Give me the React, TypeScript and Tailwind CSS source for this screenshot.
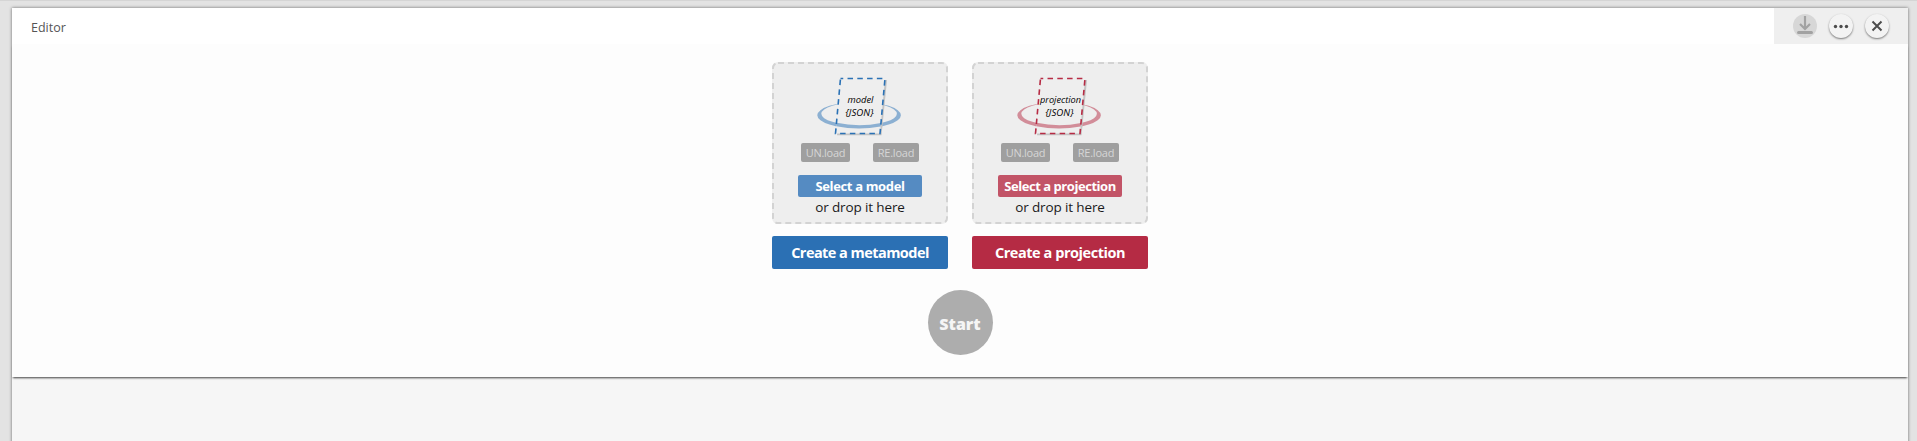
type Kind = {
  name: string;
  color: string;
  select: string;
  selectClass: string;
  create: string;
  createClass: string;
  label: string;
  labelWidth: number;
};

const kinds: Kind[] = [
  {
    name: "model",
    color: "#2a71b5",
    select: "Select a model",
    selectClass: "bg-[#558bc2] tracking-[-0.35px]",
    create: "Create a metamodel",
    createClass: "bg-[#2b70b4] tracking-[-0.55px]",
    label: "model",
    labelWidth: 26,
  },
  {
    name: "projection",
    color: "#b62b44",
    select: "Select a projection",
    selectClass: "bg-[#c25467] tracking-[-0.45px]",
    create: "Create a projection",
    createClass: "bg-[#b52b44] tracking-[-0.45px]",
    label: "projection",
    labelWidth: 41,
  },
];

function DropIcon({ kind }: { kind: Kind }) {
  const text = {
    fontFamily: '"Open Sans", sans-serif',
    fontStyle: "italic",
    fontSize: 9.5,
  };
  return (
    <svg width="90" height="62" viewBox="0 0 90 62" className="-ml-0.5 block">
      <path
        fillRule="evenodd"
        fill={kind.color}
        fillOpacity=".5"
        d="M3.300 41.200a41.800 13.200 0 1 0 83.600 0a41.800 13.200 0 1 0-83.600 0ZM7.300 39.800a37.800 11.300 0 1 1 75.600 0a37.800 11.300 0 1 1-75.600 0Z"
      />
      <path d="M28 6L73 6L67.500 61.300L23 61.300Z" fill="#c4c4c4" />
      <path d="M26.500 4.500L71 4.500L66 59.500L21.500 59.500Z" fill="#eee" />
      <path
        fill={kind.color}
        fillOpacity=".5"
        d="M22.300 52.300Q44 56.500 66.600 52.600L67 48.900Q45 53.500 22.600 48.700Z"
      />
      <path
        d="M26.500 4.500L71 4.500L66 59.500L21.500 59.500Z"
        fill="none"
        stroke={kind.color}
        strokeWidth="1.600"
        strokeDasharray="5.500 4.280"
        strokeDashoffset="2.750"
        pathLength="199.500"
      />
      <text x="46.500" y="29" textAnchor="middle" textLength={kind.labelWidth} lengthAdjust="spacingAndGlyphs" style={text}>
        {kind.label}
      </text>
      <text x="45.500" y="42" textAnchor="middle" textLength="28" lengthAdjust="spacingAndGlyphs" style={text}>
        {"{JSON}"}
      </text>
    </svg>
  );
}

function SourceColumn({ kind }: { kind: Kind }) {
  return (
    <section className="flex w-44 flex-col gap-3">
      <div className="relative flex h-[162px] flex-col items-center rounded-md bg-[#eee] pt-3">
        <svg className="pointer-events-none absolute inset-0" width="176" height="162">
          <rect x="1" y="1" width="174" height="160" rx="5" fill="none" stroke="#d3d3d3" strokeWidth="2" strokeDasharray="6 4" />
        </svg>
        <DropIcon kind={kind} />
        <div className="mt-[7px] flex w-[118px] justify-between text-[11px] leading-[20px] text-[#d6d6d6]">
          <button className="h-[19px] w-[49px] rounded-xs bg-[#9f9f9f] tracking-[-0.3px]">UN.load</button>
          <button className="h-[19px] w-[46px] rounded-xs bg-[#9f9f9f] tracking-[-0.2px]">RE.load</button>
        </div>
        <button className={`mt-[13px] h-[22px] w-[124px] whitespace-nowrap rounded-xs text-[13px] font-bold leading-[22px] text-white ${kind.selectClass}`}>
          {kind.select}
        </button>
        <p className="text-[13.500px] leading-[21px] tracking-[-0.13px] text-[#1a1a1a]">or drop it here</p>
      </div>
      <button className={`h-[33px] rounded-xs text-[14.500px] font-bold leading-[33px] text-white ${kind.createClass}`}>
        {kind.create}
      </button>
    </section>
  );
}

export default function App() {
  return (
    <div className="h-[441px] overflow-hidden border-t border-[#d5d5d5] bg-[#e3e3e3] pl-3 pr-[9px] pt-[7px] font-['Open_Sans',sans-serif]">
      <main className="flex h-[460px] flex-col bg-[#f6f6f6] shadow-[0_0_3px_rgba(0,0,0,0.55)]">
        <header className="flex h-9 shrink-0 items-center justify-between bg-white pl-[19px]">
          <h1 className="pt-[5px] text-[12.500px] leading-none text-[#555]">Editor</h1>
          <div className="flex h-9 w-[134px] items-center gap-3 bg-[#efefef] pl-[19px]">
            <button aria-label="Download" className="size-6 rounded-full bg-[#d7d7d7]">
              <svg width="24" height="24" viewBox="0 0 24 24" fill="none" stroke="#a2a2a2">
                <path d="M12 2v13M7 10l5 5l5-5" strokeWidth="2.200" />
                <path d="M5.500 18.500h13" strokeWidth="3" strokeLinecap="round" />
              </svg>
            </button>
            <button aria-label="More" className="size-6 rounded-full bg-[#f3f3f3] shadow-[0_1px_2px_rgba(0,0,0,0.5)]">
              <svg width="24" height="24" viewBox="0 0 24 24" fill="#4c4c4c">
                <circle cx="6.500" cy="12.500" r="1.700" />
                <circle cx="12" cy="12.500" r="1.700" />
                <circle cx="17.500" cy="12.500" r="1.700" />
              </svg>
            </button>
            <button aria-label="Close" className="size-6 rounded-full bg-[#f3f3f3] shadow-[0_1px_2px_rgba(0,0,0,0.5)]">
              <svg width="24" height="24" viewBox="0 0 24 24" stroke="#4c4c4c" strokeWidth="2">
                <path d="M7.500 7.500l9 9M16.500 7.500l-9 9" />
              </svg>
            </button>
          </div>
        </header>
        <div className="flex h-[333px] shrink-0 flex-col items-center bg-[#fdfdfd] pt-[18px] shadow-[0_2px_2px_-1px_rgba(0,0,0,0.75)]">
          <div className="flex gap-6">
            {kinds.map((kind) => (
              <SourceColumn key={kind.name} kind={kind} />
            ))}
          </div>
          <button className="mt-[21px] size-[65px] rounded-full bg-[#adadad] pt-[3px] text-[16px] font-extrabold text-[#f5f5f5]">
            Start
          </button>
        </div>
      </main>
    </div>
  );
}
